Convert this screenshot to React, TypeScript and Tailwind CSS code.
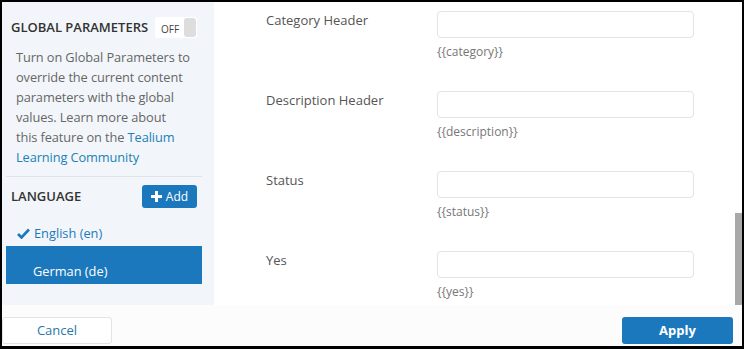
import React from "react";

const fields = [
  { label: "Category Header", hint: "{{category}}" },
  { label: "Description Header", hint: "{{description}}" },
  { label: "Status", hint: "{{status}}" },
  { label: "Yes", hint: "{{yes}}" },
];

export default function App() {
  return (
    <div className="w-[744px] h-[349px] bg-black pt-[2px] pl-[2px] pr-[2px] pb-[3px] overflow-hidden" style={{ fontFamily: "'Open Sans', sans-serif" }}>
      <div className="w-full h-full bg-white flex flex-col">
        <div className="flex flex-1 min-h-0 relative">
          <aside className="w-[212px] bg-[#f2f6fa] flex flex-col pl-[4px] pr-[12px]">
            <div className="flex items-center justify-between pl-[5px] pr-[5px] pt-[15px]">
              <span className="text-[13px] font-semibold text-[#333] whitespace-nowrap">GLOBAL PARAMETERS</span>
              <div className="w-[42px] h-[21px] bg-white rounded-[3px] flex items-center justify-between pl-[6px] pr-[1px]">
                <span className="text-[10px] text-[#444] mt-[4px]">OFF</span>
                <span className="w-[12px] h-[19px] bg-[#ddd] rounded-[3px]" />
              </div>
            </div>
            <p className="pl-[10px] mt-[9px] text-[12.8px] leading-[20px] text-[#666] tracking-[-0.1px] whitespace-nowrap">
              Turn on Global Parameters to<br />override the current content<br />parameters with the global<br />values. Learn more about<br />this feature on the <span className="text-[#2181b5]">Tealium</span><br /><span className="text-[#2181b5]">Learning Community</span>
            </p>
            <div className="h-px bg-[#dfe4ea] mt-[9px]" />
            <div className="flex items-center justify-between pl-[5px] pr-[5px] pt-[8px]">
              <span className="text-[13px] font-semibold text-[#333]">LANGUAGE</span>
              <button className="h-[23px] w-[55px] bg-[#1c78bd] rounded-[3px] text-white text-[12px] flex items-center justify-center gap-[4px]">
                <svg width="11" height="11" viewBox="0 0 11 11"><path d="M4 0h3v4h4v3H7v4H4V7H0V4h4z" fill="white" /></svg>
                <span>Add</span>
              </button>
            </div>
            <div className="flex items-center gap-[4px] pl-[11px] mt-[16px] text-[12.8px] text-[#1c78bd]">
              <svg width="13" height="11" viewBox="0 0 13 11"><path d="M1 6l3.5 3.5L12 1.5" stroke="#1c78bd" strokeWidth="2.6" fill="none" /></svg>
              <span>English (en)</span>
            </div>
            <div className="mt-[3px] h-[38px] bg-[#1c78bd] text-white text-[12.8px] pl-[27px] pt-[17px] leading-[16px]">German (de)</div>
          </aside>
          <main className="flex-1 pl-[52px] pt-[9px]">
            {fields.map((f) => (
              <div key={f.label} className="flex h-[80px]">
                <div className="w-[171px] text-[13px] text-[#555]">{f.label}</div>
                <div className="flex flex-col">
                  <div className="w-[257px] h-[27px] border border-[#e3e3e3] rounded-[4px] bg-white" />
                  <span className="text-[12px] text-[#777] mt-[6px] leading-[16px]">{f.hint}</span>
                </div>
              </div>
            ))}
          </main>
          <div className="absolute right-0 top-[211px] w-[7px] h-[92px] bg-[#a9a9a9]" />
        </div>
        <footer className="h-[41px] flex items-start justify-between bg-[#fcfcfc] pt-[12px] pr-[9px]">
          <button className="w-[110px] h-[27px] bg-white border border-[#e3e3e3] rounded-[3px] text-[13px] text-[#2a77aa]">Cancel</button>
          <button className="w-[111px] h-[27px] bg-[#1c78bd] rounded-[3px] text-[13px] font-bold text-white">Apply</button>
        </footer>
      </div>
    </div>
  );
}
